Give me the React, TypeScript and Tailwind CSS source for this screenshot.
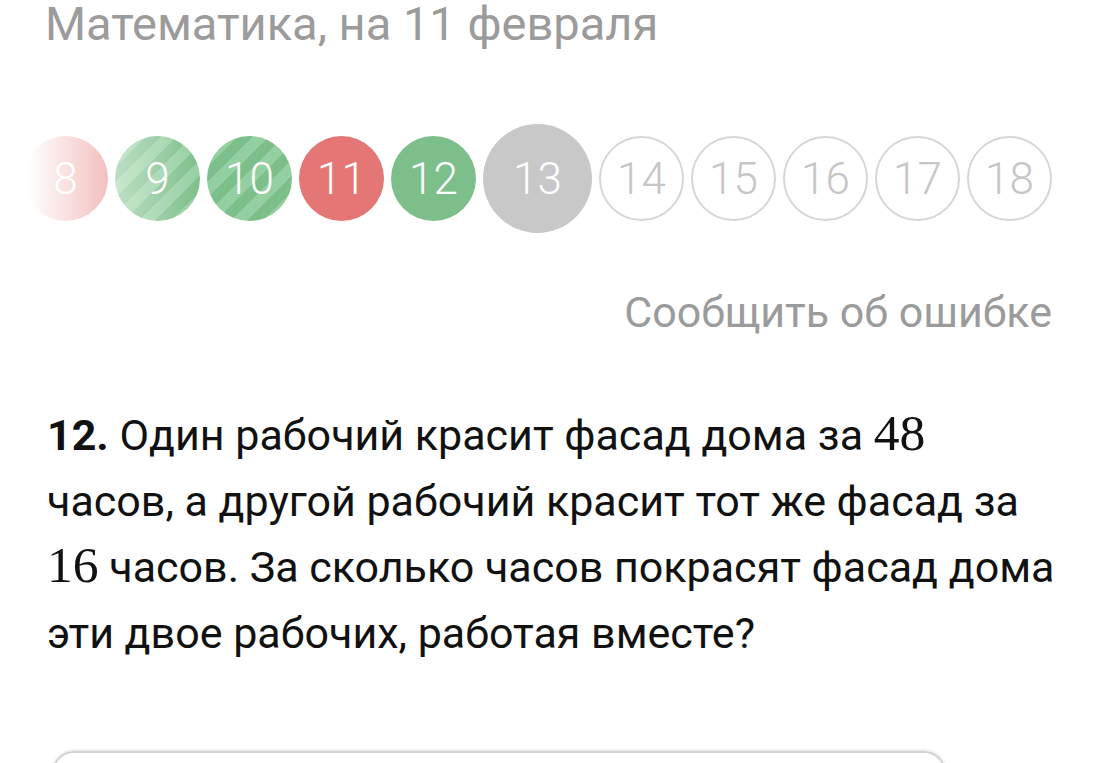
const days = [
  { n: 8, kind: "red" },
  { n: 9, kind: "striped" },
  { n: 10, kind: "striped" },
  { n: 11, kind: "red" },
  { n: 12, kind: "green" },
  { n: 13, kind: "current" },
  { n: 14, kind: "empty" },
  { n: 15, kind: "empty" },
  { n: 16, kind: "empty" },
  { n: 17, kind: "empty" },
  { n: 18, kind: "empty" },
];

const kindClass: Record<string, string> = {
  red: "w-[85px] h-[85px] bg-[#e47775] text-white",
  green: "w-[85px] h-[85px] bg-[#7dbf8a] text-white",
  striped:
    "w-[85px] h-[85px] bg-[repeating-linear-gradient(135deg,#7dbf8b_0px,#7dbf8b_11px,#94cfa1_11px,#94cfa1_22px)] text-white",
  current: "w-[109px] h-[109px] bg-[#c8c8c8] text-white",
  empty: "w-[85px] h-[85px] border-2 border-[#d6d6d6] text-[#c6c6c6]",
};

function DayCircle({ n, kind }: { n: number; kind: string }) {
  return (
    <div
      className={`shrink-0 rounded-full flex items-center justify-center text-[44px] font-light leading-none ${kindClass[kind]}`}
      style={{ fontFamily: "'Helvetica Neue', Roboto, 'Liberation Sans', sans-serif" }}
    >
      {n}
    </div>
  );
}

function MathNum({ children }: { children: string }) {
  return (
    <span className="text-[1.2em] leading-none" style={{ fontFamily: "'Liberation Serif', 'DejaVu Serif', serif" }}>
      {children}
    </span>
  );
}

export default function App() {
  return (
    <div
      className="h-[763px] w-full bg-white overflow-hidden"
      style={{ fontFamily: "Roboto, 'Noto Sans', sans-serif" }}
    >
      <h1 className="pl-[45px] text-[47px] leading-[48px] text-[#9b9b9b] whitespace-nowrap">
        Математика, на 11 февраля
      </h1>

      <div className="relative mt-[75px] h-[111px] flex items-center gap-[7px] pl-[23px]">
        {days.map((d) => (
          <DayCircle key={d.n} n={d.n} kind={d.kind} />
        ))}
        <div className="absolute left-0 top-0 bottom-0 w-[200px] bg-gradient-to-r from-white from-[14%] to-transparent" />
      </div>

      <div className="flex justify-end pr-[64px] mt-[52px]">
        <span className="text-[43px] leading-[52px] text-[#9b9b9b]">Сообщить об ошибке</span>
      </div>

      <p className="pl-[47px] mt-[64px] text-[43px] leading-[66px] text-[#111] whitespace-nowrap">
        <span className="font-bold">12.</span> Один рабочий красит фасад дома за <MathNum>48</MathNum>
        <br />
        часов, а другой рабочий красит тот же фасад за
        <br />
        <MathNum>16</MathNum> часов. За сколько часов покрасят фасад дома
        <br />
        эти двое рабочих, работая вместе?
      </p>

      <div className="ml-[52px] mt-[85px] w-[894px] h-[80px] rounded-[22px] border-2 border-[#d2d2d2] shadow-[0_-1px_3px_rgba(0,0,0,0.12)]" />
    </div>
  );
}
